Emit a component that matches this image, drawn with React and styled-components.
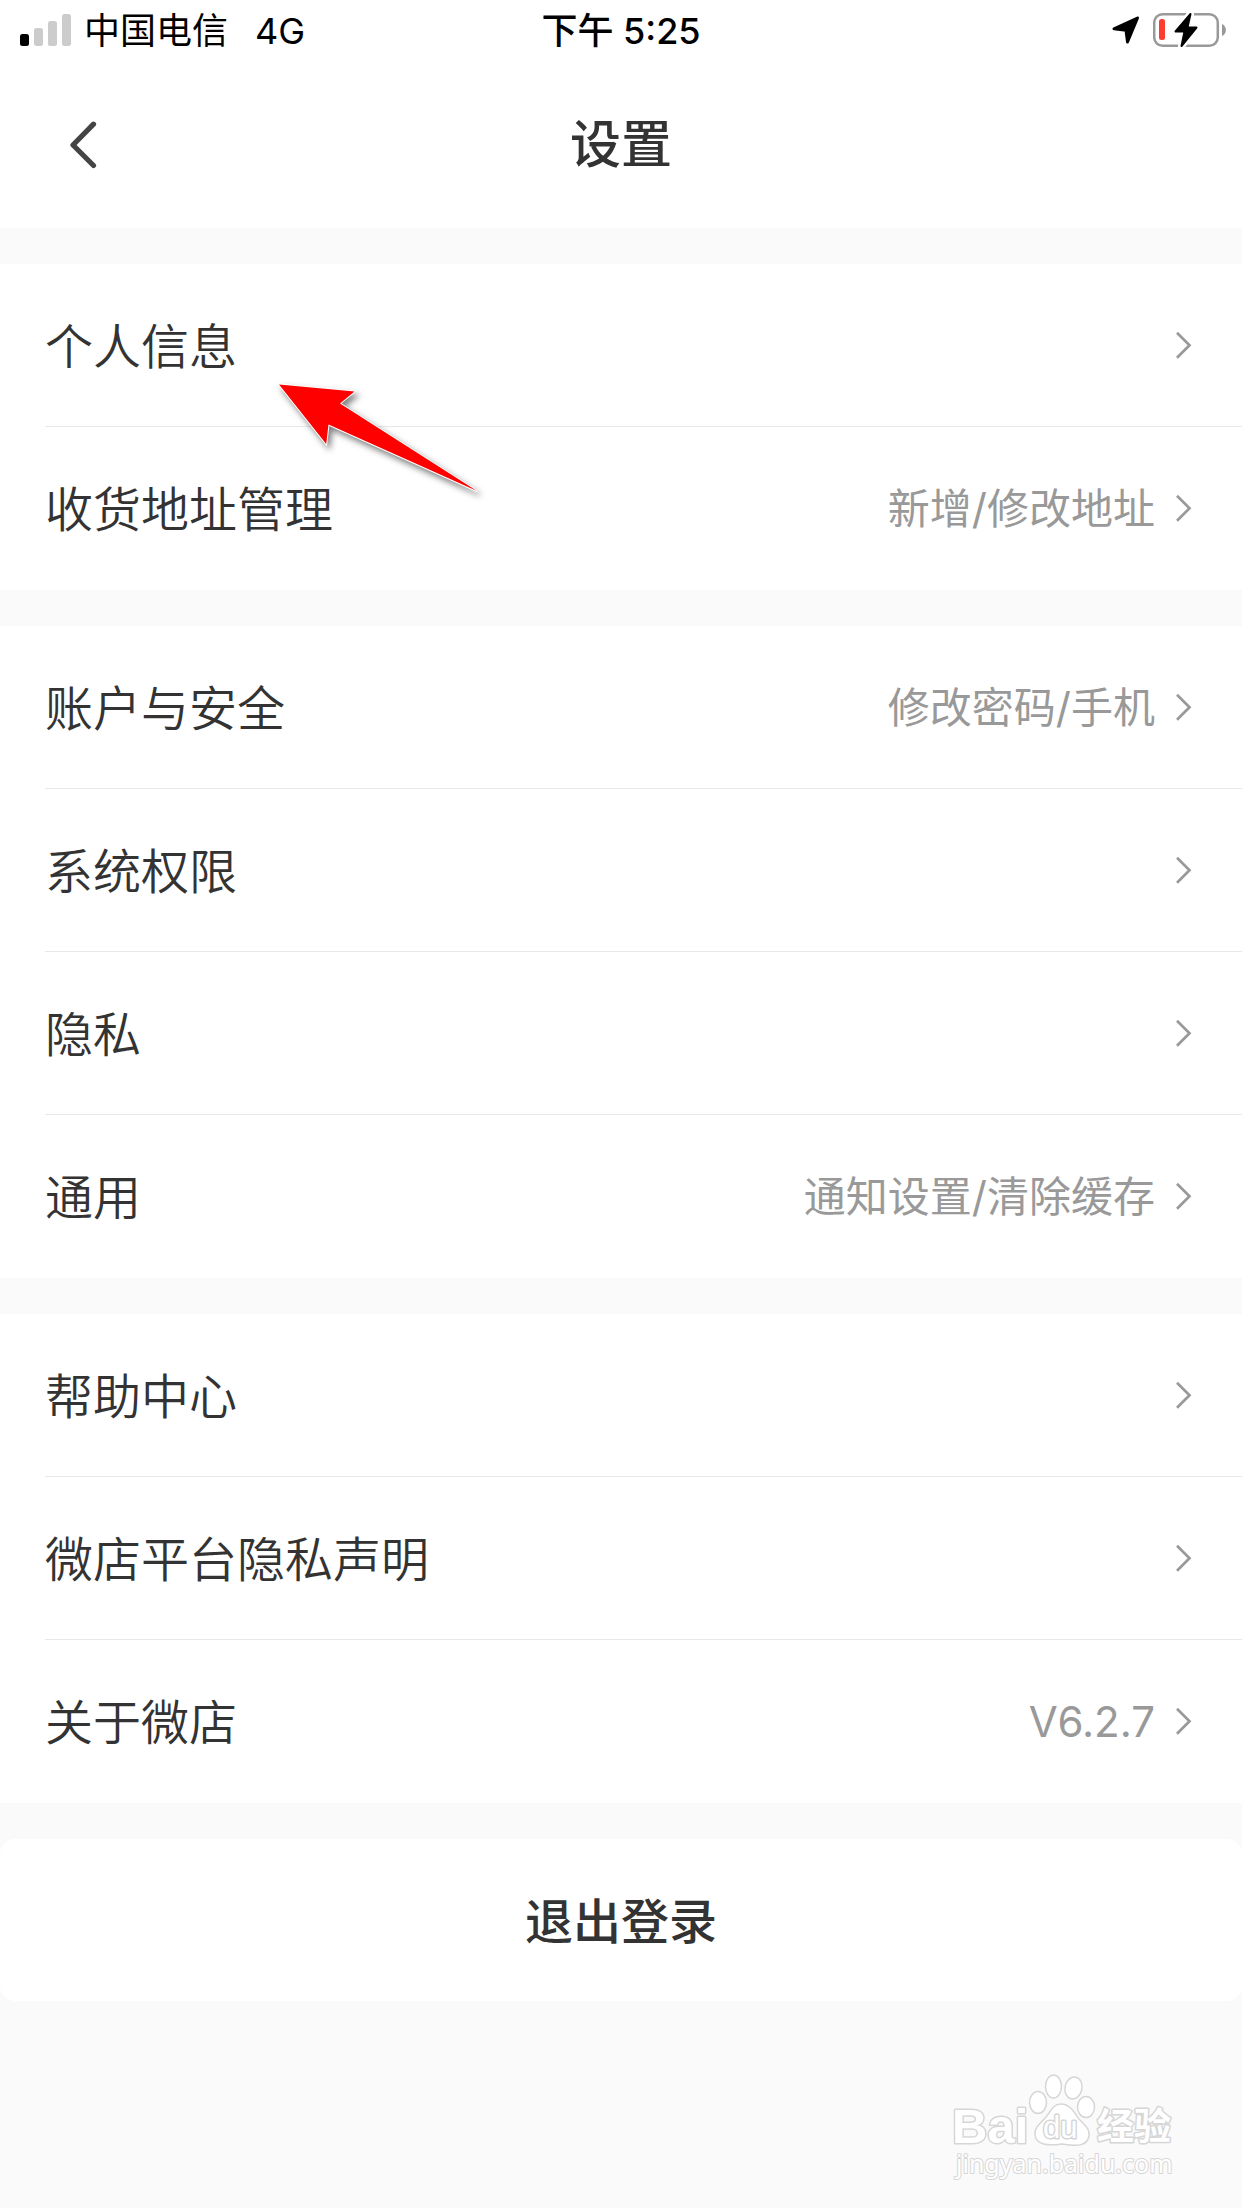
import styled, { createGlobalStyle } from 'styled-components';

const GlobalStyle = createGlobalStyle`
    * {
        box-sizing: border-box;
    }
    body {
        margin: 0;
        background-color: #fafafa;
        color: #333333;
        font-family: Inter, "Noto Sans CJK SC", sans-serif;
    }
`;

const Page = styled.div`
    display: flex;
    flex-direction: column;
    min-height: 100vh;
`;

const StatusBar = styled.div`
    display: grid;
    grid-template-columns: 1fr auto 1fr;
    align-items: center;
    height: 60px;
    padding: 0 16px;
    background-color: #ffffff;
    color: #000000;
    font-size: 36px;
`;

const StatusGroup = styled.div`
    display: flex;
    align-items: center;
    justify-content: ${props => props.$end ? 'flex-end' : 'flex-start'};
    gap: 13px;
    padding-left: 4px;
`;

const Carrier = styled.span`
    padding-top: 2px;
    line-height: 58px;
`;

const Network = styled(Carrier)`
    margin-left: 14px;
`;

const Clock = styled.time`
    padding-top: 2px;
    font-weight: 500;
    line-height: 58px;
`;

const Header = styled.header`
    display: grid;
    grid-template-columns: 1fr auto 1fr;
    align-items: center;
    height: 168px;
    padding: 2px 60px 0;
    background-color: #ffffff;
`;

const BackButton = styled.button`
    display: flex;
    justify-self: start;
    padding: 0;
    border: none;
    background: none;
    cursor: pointer;
`;

const Title = styled.h1`
    margin: 0;
    font-size: 51px;
    font-weight: 500;
    line-height: 72px;
`;

const Main = styled.main`
    display: flex;
    flex-direction: column;
    gap: 36px;
    padding-top: 36px;
`;

const Group = styled.nav`
    padding-left: 45px;
    background-color: #ffffff;
`;

const Row = styled.a`
    position: relative;
    display: flex;
    align-items: center;
    height: 163px;
    padding-right: 50px;
    color: inherit;
    text-decoration: none;
    & + & {
        box-shadow: 0 -1px 0 #e8e8e8;
    }
`;

const RowLabel = styled.span`
    flex-grow: 1;
    padding-top: 2px;
    font-size: 48px;
    font-weight: 350;
    line-height: 72px;
`;

const RowValue = styled.span`
    margin-right: 19px;
    color: #999999;
    font-size: 42px;
    line-height: 60px;
`;

const LogoutButton = styled.button`
    height: 162px;
    padding: 0 0 4px;
    border: none;
    border-radius: 15px;
    background-color: #ffffff;
    color: #333333;
    font-family: inherit;
    font-size: 48px;
    font-weight: 500;
    cursor: pointer;
`;

const Pointer = styled.svg`
    position: absolute;
    top: 110px;
    left: 225px;
    z-index: 1;
    overflow: visible;
    filter: drop-shadow(3px 4px 3px rgba(0, 0, 0, 0.5));
    pointer-events: none;
`;

const Footer = styled.footer`
    display: flex;
    justify-content: flex-end;
    margin-top: auto;
    padding: 0 62px 22px 0;
`;

const SignalIcon = () => (
    <svg width="51" height="32" viewBox="0 0 51 32" aria-hidden="true">
        <rect x="0" y="20" width="9" height="12" rx="2.5" fill="#000000" />
        <rect x="14" y="14" width="9" height="18" rx="2.5" fill="#cccccc" />
        <rect x="28" y="7" width="9" height="25" rx="2.5" fill="#cccccc" />
        <rect x="42" y="0" width="9" height="32" rx="2.5" fill="#cccccc" />
    </svg>
);

const LocationIcon = () => (
    <svg width="28" height="28" viewBox="0 0 28 28" aria-hidden="true">
        <path
            d="M25.5 2 2 12.8 14 14.2 15.5 26Z"
            stroke="#000000"
            strokeWidth="3"
            strokeLinejoin="round"
        />
    </svg>
);

const BatteryIcon = () => (
    <svg width="73" height="36" viewBox="0 0 73 36" aria-hidden="true">
        <rect x="1.2" y="2.2" width="63.6" height="31.6" rx="8.5" fill="none" stroke="#999999" strokeWidth="2.5" />
        <path d="M69 12c5.2 2 5.2 10 0 12Z" fill="#999999" />
        <rect x="6" y="7" width="6" height="21" rx="2.5" fill="#ff3b30" />
        <path
            d="M37.5 2 22.5 19.5h9L28.5 34 43.5 15.5h-9Z"
            fill="#000000"
            stroke="#ffffff"
            strokeWidth="7"
            strokeLinejoin="round"
        />
        <path
            d="M37.5 2 22.5 19.5h9L28.5 34 43.5 15.5h-9Z"
            fill="#000000"
            stroke="#000000"
            strokeWidth="2"
            strokeLinejoin="round"
        />
    </svg>
);

const BackIcon = () => (
    <svg width="48" height="48" viewBox="0 0 48 48" fill="none" aria-hidden="true">
        <path d="M33.5 3.2 13 24l20.5 20.5" stroke="#444444" strokeWidth="5.2" strokeLinecap="round" strokeLinejoin="round" />
    </svg>
);

const ChevronIcon = () => (
    <svg width="18" height="28" viewBox="0 0 18 28" fill="none" aria-hidden="true">
        <path d="M3 .8 15.5 13.3 3 25.8" stroke="#999999" strokeWidth="2.7" />
    </svg>
);

const PointerArrow = () => (
    <Pointer width="220" height="120" viewBox="270 374 220 120" aria-hidden="true">
        <path
            d="M279 384.5 354.5 391.5 340 403.500 477 491 328.500 424.500 326.200 444Z"
            fill="#ff0000"
            stroke="#ffffff"
            strokeWidth="2"
            paintOrder="stroke"
        />
    </Pointer>
);

const BaiduLogo = () => (
    <svg width="230" height="116" viewBox="950 2070 230 116" role="img" aria-label="Baidu 经验">
        <g fill="#ffffff" stroke="#d6d6d6" strokeWidth="1.5">
            <ellipse cx="1038" cy="2102.5" rx="8.5" ry="11" />
            <ellipse cx="1053.5" cy="2086.5" rx="8" ry="11.5" />
            <ellipse cx="1073.5" cy="2088" rx="8.5" ry="11" transform="rotate(12 1073.5 2088)" />
            <ellipse cx="1086" cy="2107" rx="8.5" ry="10.5" />
            <path d="M1061 2104c9 0 13 8 18 15 5 6 11 9 10 17-2 11-13 10-27 8-14 2-26 1-27-9-1-8 6-12 11-18 5-6 7-13 15-13Z" />
        </g>
        <g fill="#ffffff" stroke="#d6d6d6" strokeWidth="3" paintOrder="stroke" strokeLinejoin="round">
            <text x="952" y="2143" fontFamily="Liberation Sans" fontWeight="700" fontSize="49">Bai</text>
            <text x="1043" y="2138" fontFamily="Liberation Sans" fontSize="31">du</text>
            <text x="1097" y="2140" fontFamily="Noto Sans CJK SC" fontWeight="700" fontSize="37">经验</text>
            <text x="956" y="2173" fontFamily="Noto Sans" fontSize="25" strokeWidth="2">jingyan.baidu.com</text>
        </g>
    </svg>
);

const groups = [
    [
        { label: '个人信息', pointer: true },
        { label: '收货地址管理', value: '新增/修改地址' },
    ],
    [
        { label: '账户与安全', value: '修改密码/手机' },
        { label: '系统权限' },
        { label: '隐私' },
        { label: '通用', value: '通知设置/清除缓存' },
    ],
    [
        { label: '帮助中心' },
        { label: '微店平台隐私声明' },
        { label: '关于微店', value: 'V6.2.7' },
    ],
];

const SettingsRow = (props) => {
    return (
        <Row href="#">
            <RowLabel>{props.item.label}</RowLabel>
            {props.item.value && <RowValue>{props.item.value}</RowValue>}
            <ChevronIcon />
            {props.item.pointer && <PointerArrow />}
        </Row>
    )
}

const App = () => {
    return (
        <Page>
            <GlobalStyle />
            <StatusBar>
                <StatusGroup>
                    <SignalIcon />
                    <Carrier>中国电信</Carrier>
                    <Network>4G</Network>
                </StatusGroup>
                <Clock>下午 5:25</Clock>
                <StatusGroup $end>
                    <LocationIcon />
                    <BatteryIcon />
                </StatusGroup>
            </StatusBar>
            <Header>
                <BackButton type="button" aria-label="返回">
                    <BackIcon />
                </BackButton>
                <Title>设置</Title>
            </Header>
            <Main>
                {groups.map((items, index) => (
                    <Group key={index}>
                        {items.map(item => <SettingsRow key={item.label} item={item} />)}
                    </Group>
                ))}
                <LogoutButton type="button">退出登录</LogoutButton>
            </Main>
            <Footer>
                <BaiduLogo />
            </Footer>
        </Page>
    )
}

export default App;
